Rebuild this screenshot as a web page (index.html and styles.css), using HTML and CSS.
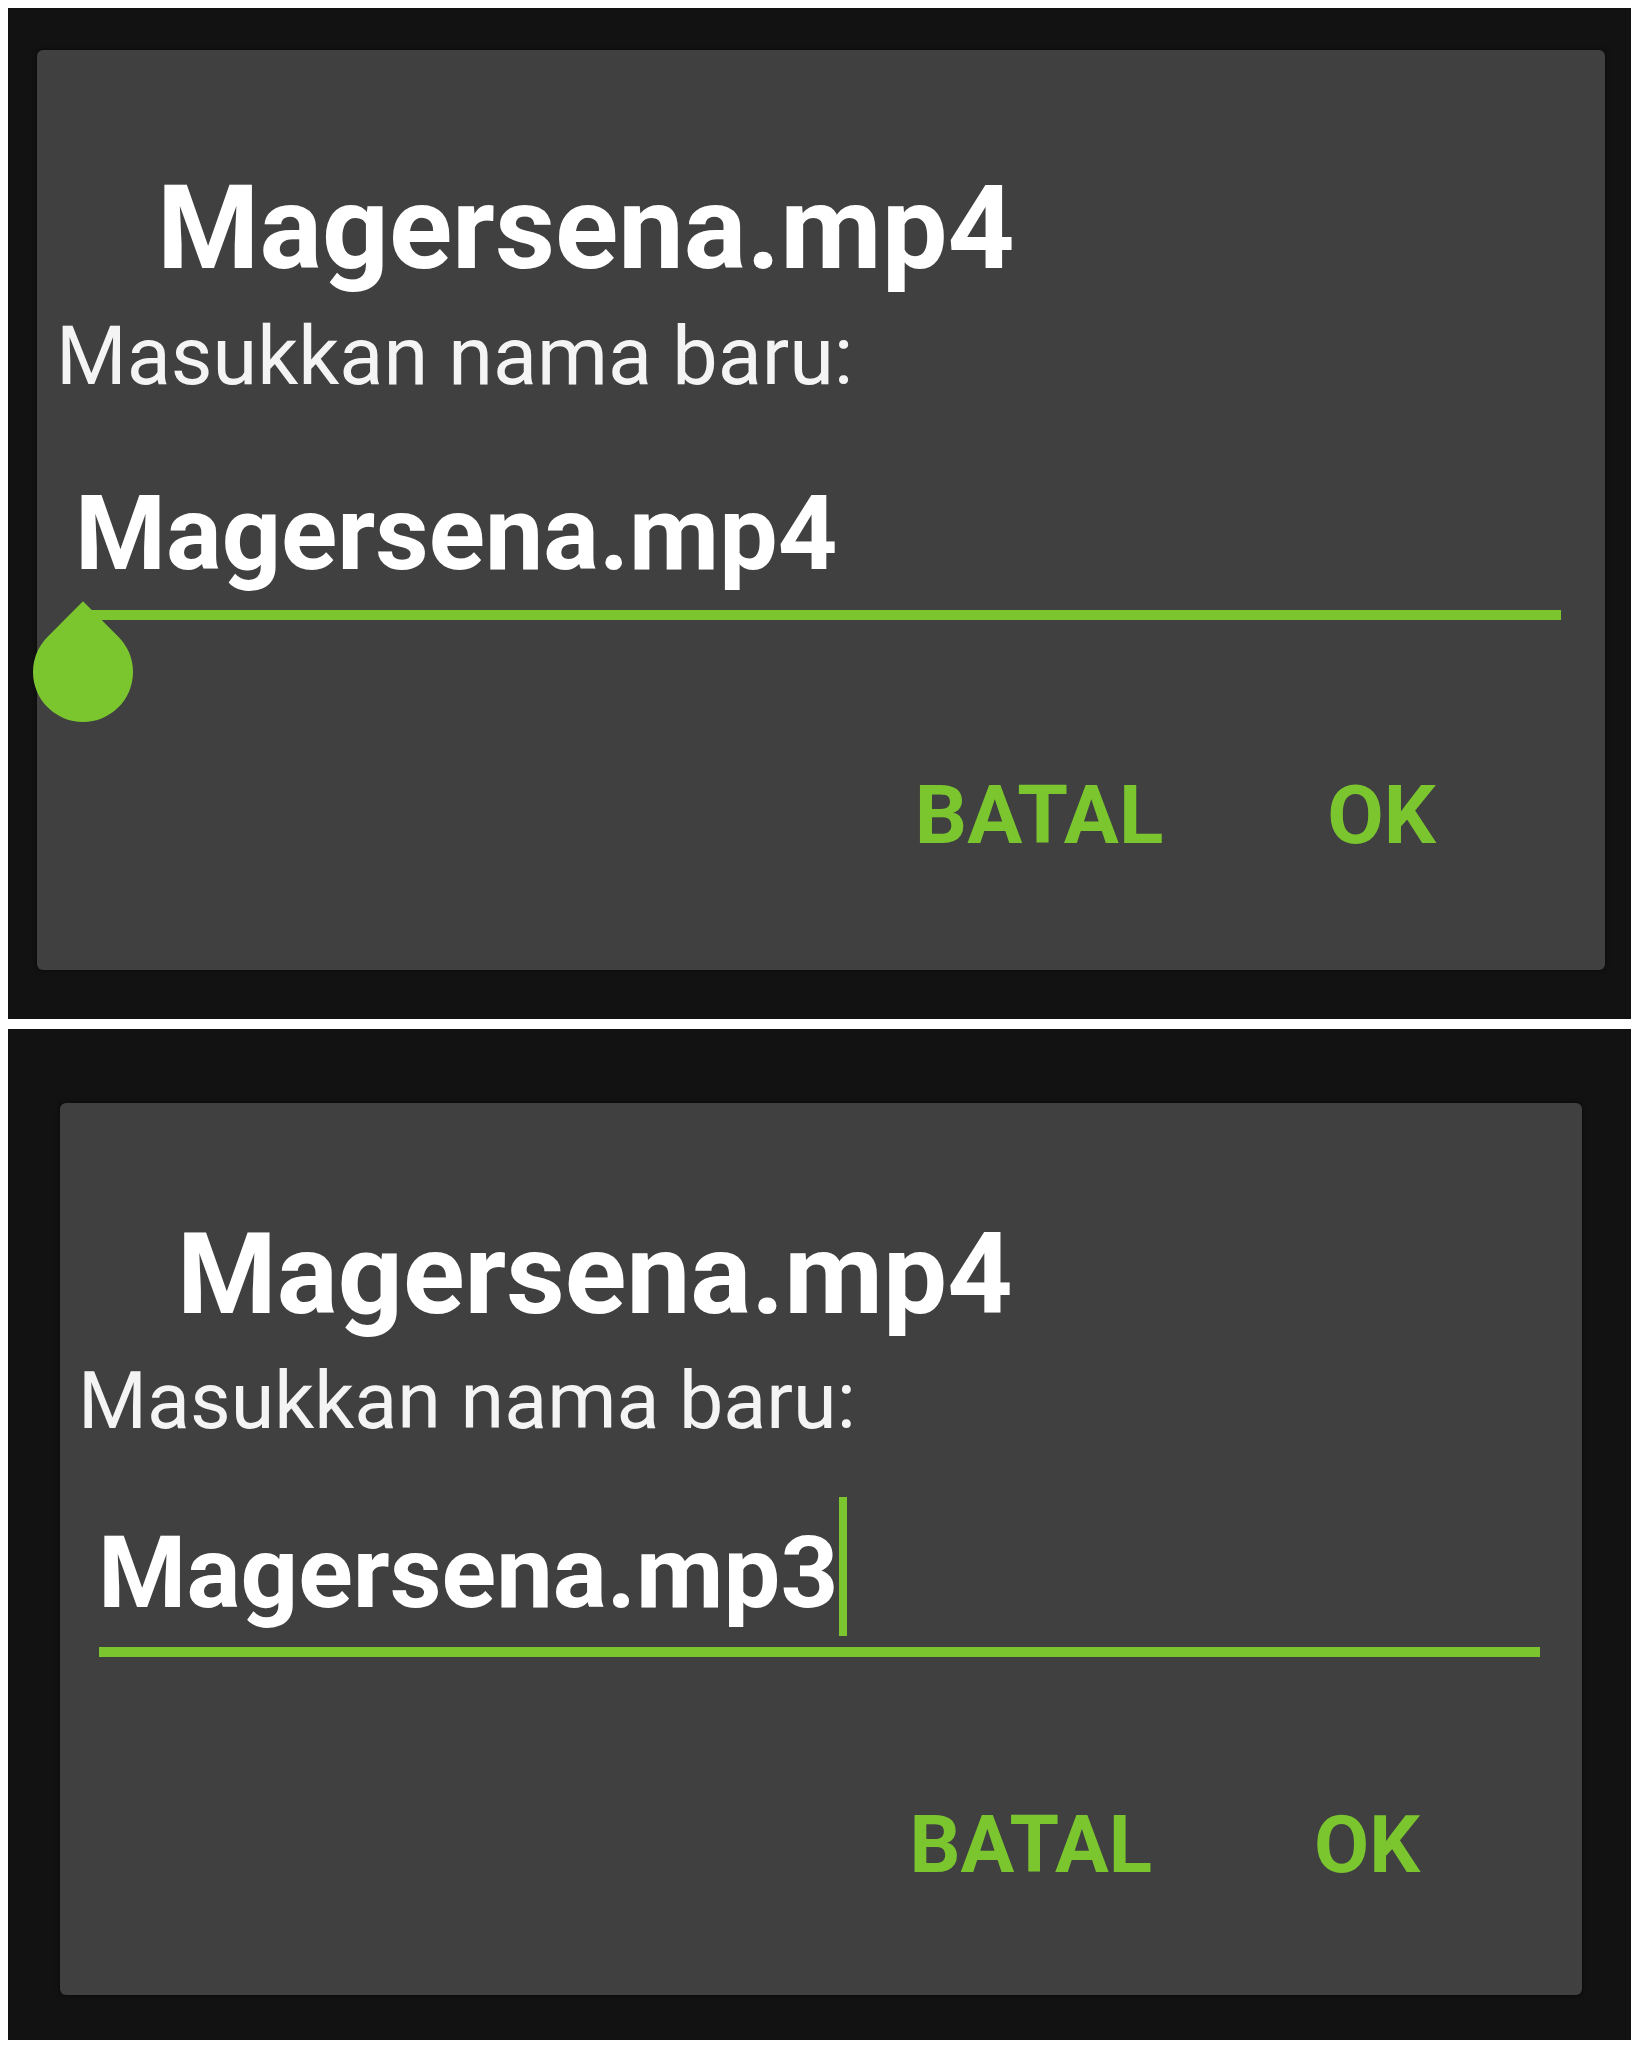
FILE: index.html
```html
<!DOCTYPE html>
<html lang="id">
<head>
<meta charset="utf-8">
<title>Rename dialog</title>
<link rel="stylesheet" href="styles.css">
</head>
<body>
<div class="shot">
  <section class="panel panel-a">
    <div class="dialog dialog-a">
      <div class="title">Magersena.mp4</div>
      <div class="label">Masukkan nama baru:</div>
      <div class="field">
        <div class="value"><span class="value-text">Magersena.mp4</span></div>
        <div class="underline"><span class="handle"></span></div>
      </div>
      <div class="actions">
        <span class="btn">BATAL</span>
        <span class="btn">OK</span>
      </div>
    </div>
  </section>
  <section class="panel panel-b">
    <div class="dialog dialog-b">
      <div class="title">Magersena.mp4</div>
      <div class="label">Masukkan nama baru:</div>
      <div class="field">
        <div class="value"><span class="value-text">Magersena.mp3</span><span class="caret"></span></div>
        <div class="underline"></div>
      </div>
      <div class="actions">
        <span class="btn">BATAL</span>
        <span class="btn">OK</span>
      </div>
    </div>
  </section>
</div>
</body>
</html>
```

FILE: styles.css
```css
html, body {
  margin: 0;
  padding: 0;
  background: #ffffff;
}

body {
  font-family: Roboto, "Noto Sans", "Liberation Sans", sans-serif;
  color: #ffffff;
}

.shot {
  display: flex;
  flex-direction: column;
  gap: 10px;
  padding: 8px 7px 8px 8px;
}

.panel {
  background: #121212;
}

.panel-a {
  padding: 42px 26px 49px 29px;
}

.panel-b {
  padding: 74px 49px 45px 52px;
}

.dialog {
  background: #404040;
  border-radius: 6px;
  box-shadow: 0 0 5px rgba(0, 0, 0, 0.55);
  display: flex;
  flex-direction: column;
}

.title {
  font-weight: 700;
  white-space: nowrap;
}

.label {
  font-weight: 400;
  color: #f4f4f4;
  white-space: nowrap;
}

.value {
  display: flex;
  align-items: flex-start;
  font-weight: 700;
  white-space: nowrap;
}

.underline {
  position: relative;
  height: 10px;
  background: #7bc62f;
}

.handle {
  position: absolute;
  left: -50px;
  top: 12px;
  width: 100px;
  height: 100px;
  background: #7bc62f;
  border-radius: 0 50% 50% 50%;
  transform: rotate(45deg);
}

.caret {
  display: block;
  width: 8px;
  background: #7bc62f;
}

.actions {
  display: flex;
  justify-content: flex-end;
}

.btn {
  font-weight: 700;
  color: #7bc62f;
  white-space: nowrap;
}

/* ---------- first dialog ---------- */
.dialog-a {
  padding: 120px 0 114px 19px;
}

.dialog-a .title {
  font-size: 117px;
  line-height: 116px;
  margin-left: 101px;
}

.dialog-a .label {
  font-size: 81px;
  line-height: 80px;
  margin-top: 31px;
}

.dialog-a .field {
  margin-top: 85px;
  margin-left: 19px;
}

.dialog-a .value {
  font-size: 104px;
  line-height: 104px;
  height: 104px;
}

.dialog-a .underline {
  margin-top: 24px;
  margin-left: 8px;
  margin-right: 44px;
}

.dialog-a .actions {
  margin-top: 154px;
  padding-right: 169px;
  gap: 164px;
}

.dialog-a .btn {
  font-size: 82px;
  line-height: 82px;
}

/* ---------- second dialog ---------- */
.dialog-b {
  padding: 115px 0 110px 18px;
}

.dialog-b .title {
  font-size: 114px;
  line-height: 113px;
  margin-left: 99px;
}

.dialog-b .label {
  font-size: 79px;
  line-height: 78px;
  margin-top: 31px;
}

.dialog-b .field {
  margin-top: 83px;
  margin-left: 20px;
}

.dialog-b .value {
  font-size: 101px;
  line-height: 99px;
  height: 99px;
}

.dialog-b .caret {
  height: 139px;
  margin-top: -26px;
  margin-left: 1px;
}

.dialog-b .underline {
  margin-top: 25px;
  margin-left: 1px;
  margin-right: 42px;
}

.dialog-b .actions {
  margin-top: 148px;
  padding-right: 162px;
  gap: 162px;
}

.dialog-b .btn {
  font-size: 80px;
  line-height: 80px;
}
```
